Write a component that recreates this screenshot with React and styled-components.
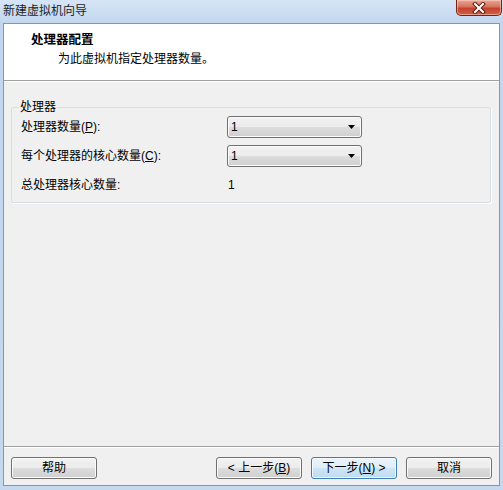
import React from 'react';
import styled, { createGlobalStyle } from 'styled-components';

const GlobalStyle = createGlobalStyle`
    html, body {
        margin: 0;
        padding: 0;
        background: #ffffff;
    }
    * {
        box-sizing: border-box;
    }
`;

const font = `"Liberation Sans", "Noto Sans CJK SC", sans-serif`;

const Window = styled.div`
    width: 503px;
    height: 490px;
    display: flex;
    flex-direction: column;
    padding: 0 3px 4px 3px;
    background: linear-gradient(to bottom, #d6e5f6 0px, #c2d7ef 23px, #c4d8ef 100%);
    font-family: ${font};
    font-size: 12px;
    color: #000;
`;

const TitleBar = styled.div`
    height: 23px;
    flex-shrink: 0;
    display: flex;
    align-items: flex-start;
`;

const Caption = styled.div`
    line-height: 22px;
    color: #1e1e1e;
`;

const CloseButton = styled.div`
    margin-left: auto;
    margin-right: -2px;
    width: 46px;
    height: 16px;
    display: flex;
    align-items: center;
    justify-content: center;
    border: 1px solid #6f2416;
    border-top: none;
    border-radius: 0 0 5px 5px;
    background: linear-gradient(to bottom, #e8a796 0%, #d7725c 45%, #c5422b 55%, #d0604a 100%);
    box-shadow: inset 0 0 0 1px rgba(255, 220, 210, 0.5);
`;

const Client = styled.div`
    flex: 1;
    display: flex;
    flex-direction: column;
    border: 1px solid #8397ae;
    background: #f0f0f0;
`;

const Header = styled.div`
    height: 57px;
    flex-shrink: 0;
    background: #ffffff;
    border-bottom: 1px solid #a0a0a0;
    box-shadow: 0 1px 0 #ffffff;
    padding: 9px 0 0 27px;
`;

const HeaderTitle = styled.div`
    font-weight: bold;
    line-height: 14px;
    font-size: 12.5px;
`;

const HeaderText = styled.div`
    line-height: 14px;
    margin-top: 5px;
    padding-left: 27px;
`;

const Body = styled.div`
    flex: 1;
    padding: 19px 8px 0 7px;
`;

const GroupBox = styled.fieldset`
    margin: 0;
    padding: 0 8px 6px 7px;
    border: 1px solid #d5dfe5;
    border-radius: 2px;
    box-shadow: 1px 1px 0 #ffffff;
`;

const Legend = styled.legend`
    padding: 0 1px;
    line-height: 14px;
`;

const Rows = styled.div`
    display: grid;
    grid-template-columns: 206px 135px;
    grid-auto-rows: 22px;
    row-gap: 7px;
    padding: 2px 0 0 2px;
    align-items: center;
`;

const Label = styled.div`
    line-height: 14px;
`;

const Value = styled.div`
    padding-left: 1px;
    line-height: 14px;
`;

const Combo = styled.div`
    height: 22px;
    display: flex;
    align-items: center;
    padding: 0 6px 0 3px;
    border: 1px solid #707070;
    border-radius: 3px;
    background: linear-gradient(to bottom, #f2f2f2 0%, #ebebeb 50%, #dddddd 50%, #cfcfcf 100%);
    box-shadow: inset 0 0 0 1px #fbfbfb;
`;

const ComboText = styled.span`
    flex: 1;
`;

const Footer = styled.div`
    flex-shrink: 0;
    display: flex;
    justify-content: space-between;
    border-top: 1px solid #a0a0a0;
    box-shadow: inset 0 1px 0 #ffffff;
    padding: 10px 7px 6px 7px;
`;

const ButtonGroup = styled.div`
    display: flex;
    gap: 9px;
`;

const Button = styled.div`
    width: 86px;
    height: 22px;
    display: flex;
    align-items: center;
    justify-content: center;
    border: 1px solid ${(props) => (props.primary ? '#3c7fb1' : '#707070')};
    border-radius: 3px;
    background: ${(props) =>
        props.primary
            ? 'linear-gradient(to bottom, #eaf4fb 0%, #dfeef9 50%, #cfe5f5 50%, #bedcf0 100%)'
            : 'linear-gradient(to bottom, #f2f2f2 0%, #ebebeb 50%, #dddddd 50%, #cfcfcf 100%)'};
    box-shadow: inset 0 0 0 1px ${(props) => (props.primary ? '#f4fafe' : '#fbfbfb')};
    line-height: 14px;
    color: #000;
`;

const Key = styled.span`
    text-decoration: underline;
`;

function DropArrow() {
    return (
        <svg width="7" height="4" viewBox="0 0 7 4">
            <path d="M0 0 H7 L3.5 4 Z" fill="#000" />
        </svg>
    );
}

function CloseGlyph() {
    return (
        <svg width="14" height="12" viewBox="0 0 14 12">
            <path d="M3 2 L11 10 M11 2 L3 10" stroke="#5b1e12" strokeWidth="4" strokeLinecap="square" />
            <path d="M3 2 L11 10 M11 2 L3 10" stroke="#ffffff" strokeWidth="2" strokeLinecap="square" />
        </svg>
    );
}

export default function App() {
    return (
        <Window>
            <GlobalStyle />
            <TitleBar>
                <Caption>新建虚拟机向导</Caption>
                <CloseButton>
                    <CloseGlyph />
                </CloseButton>
            </TitleBar>
            <Client>
                <Header>
                    <HeaderTitle>处理器配置</HeaderTitle>
                    <HeaderText>为此虚拟机指定处理器数量。</HeaderText>
                </Header>
                <Body>
                    <GroupBox>
                        <Legend>处理器</Legend>
                        <Rows>
                            <Label>
                                处理器数量(<Key>P</Key>):
                            </Label>
                            <Combo>
                                <ComboText>1</ComboText>
                                <DropArrow />
                            </Combo>
                            <Label>
                                每个处理器的核心数量(<Key>C</Key>):
                            </Label>
                            <Combo>
                                <ComboText>1</ComboText>
                                <DropArrow />
                            </Combo>
                            <Label>总处理器核心数量:</Label>
                            <Value>1</Value>
                        </Rows>
                    </GroupBox>
                </Body>
                <Footer>
                    <Button>帮助</Button>
                    <ButtonGroup>
                        <Button>
                            &lt; 上一步(<Key>B</Key>)
                        </Button>
                        <Button primary>
                            下一步(<Key>N</Key>) &gt;
                        </Button>
                        <Button>取消</Button>
                    </ButtonGroup>
                </Footer>
            </Client>
        </Window>
    );
}
